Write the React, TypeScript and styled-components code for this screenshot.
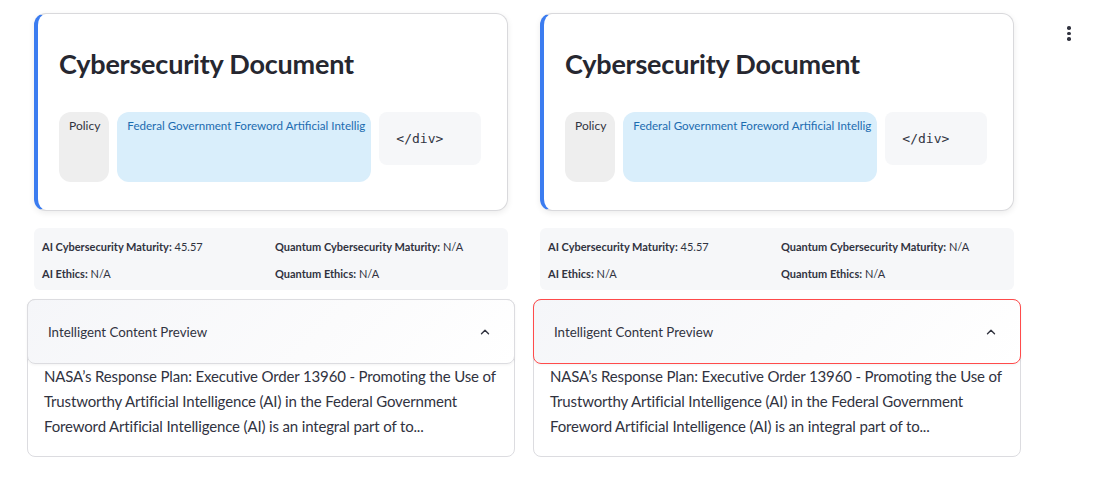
import React from 'react';
import styled, { createGlobalStyle } from 'styled-components';

type Doc = {
  title: string;
  category: string;
  source: string;
  aiMaturity: string;
  quantumMaturity: string;
  aiEthics: string;
  quantumEthics: string;
  preview: string;
};

const doc: Doc = {
  title: 'Cybersecurity Document',
  category: 'Policy',
  source: 'Federal Government Foreword Artificial Intellig',
  aiMaturity: '45.57',
  quantumMaturity: 'N/A',
  aiEthics: 'N/A',
  quantumEthics: 'N/A',
  preview:
    'NASA’s Response Plan: Executive Order 13960 - Promoting the Use of Trustworthy Artificial Intelligence (AI) in the Federal Government Foreword Artificial Intelligence (AI) is an integral part of to...',
};

const GlobalStyle = createGlobalStyle`
  body {
    margin: 0;
    background: #ffffff;
    font-family: "Lato", "Noto Sans", sans-serif;
    color: #31333f;
  }
`;

function ChevronUp(): JSX.Element {
  return (
    <svg width="14" height="14" viewBox="0 0 24 24" fill="none">
      <path
        d="M6 15l6-6 6 6"
        stroke="#31333f"
        strokeWidth="2.4"
        strokeLinecap="round"
        strokeLinejoin="round"
      />
    </svg>
  );
}

function DocColumn({ content, active }: { content: Doc; active: boolean }): JSX.Element {
  return (
    <Column>
      <Card>
        <Title>{content.title}</Title>
        <PillRow>
          <Pill tone="grey">{content.category}</Pill>
          <Pill tone="blue" wide>
            {content.source}
          </Pill>
          <CodeBlock>&lt;/div&gt;</CodeBlock>
        </PillRow>
      </Card>

      <Metrics>
        <Metric>
          <b>AI Cybersecurity Maturity:</b> {content.aiMaturity}
        </Metric>
        <Metric>
          <b>Quantum Cybersecurity Maturity:</b> {content.quantumMaturity}
        </Metric>
        <Metric>
          <b>AI Ethics:</b> {content.aiEthics}
        </Metric>
        <Metric>
          <b>Quantum Ethics:</b> {content.quantumEthics}
        </Metric>
      </Metrics>

      <Expander>
        <ExpanderHeader active={active}>
          <span>Intelligent Content Preview</span>
          <ChevronUp />
        </ExpanderHeader>
        <ExpanderBody>{content.preview}</ExpanderBody>
      </Expander>
    </Column>
  );
}

export default function App(): JSX.Element {
  return (
    <>
      <GlobalStyle />
      <Page>
        <Columns>
          <DocColumn content={doc} active={false} />
          <DocColumn content={doc} active />
        </Columns>
        <MenuButton aria-label="menu">
          <Dot />
          <Dot />
          <Dot />
        </MenuButton>
      </Page>
    </>
  );
}

const Page = styled.div`
  position: relative;
  width: 1096px;
  height: 481px;
  padding: 13px 0 0 27px;
  box-sizing: border-box;
`;

const Columns = styled.div`
  display: grid;
  grid-template-columns: 488px 488px;
  column-gap: 18px;
`;

const Column = styled.div`
  display: flex;
  flex-direction: column;
`;

const Card = styled.div`
  margin: 0 7px;
  height: 198px;
  box-sizing: border-box;
  padding: 33px 24px 0 21px;
  background: #ffffff;
  border: 1px solid #d9d9dc;
  border-left: 4px solid #3b7cf0;
  border-radius: 12px;
  box-shadow: 0 2px 6px rgba(0, 0, 0, 0.08);
`;

const Title = styled.h3`
  margin: 0 0 31px;
  font-size: 27px;
  line-height: 34px;
  font-weight: 700;
  color: #262730;
  letter-spacing: -0.2px;
`;

const PillRow = styled.div`
  display: flex;
  align-items: flex-start;
  gap: 8px;
`;

const Pill = styled.div<{ tone: 'grey' | 'blue'; wide?: boolean }>`
  height: 70px;
  box-sizing: border-box;
  padding: 7px 9px 7px 10px;
  border-radius: 12px;
  font-size: ${({ wide }) => (wide ? '11.6px' : '12px')};
  line-height: 14px;
  white-space: nowrap;
  width: ${({ wide }) => (wide ? '254px' : 'auto')};
  background: ${({ tone }) => (tone === 'blue' ? '#d9eefb' : '#eeeeee')};
  color: ${({ tone }) => (tone === 'blue' ? '#1c6cb0' : '#31333f')};
`;

const CodeBlock = styled.div`
  width: 102px;
  height: 53px;
  box-sizing: border-box;
  padding: 0 17px;
  display: flex;
  align-items: center;
  background: #f6f7f9;
  border-radius: 8px;
  font-family: "DejaVu Sans Mono", "Liberation Mono", monospace;
  font-size: 13px;
  color: #31333f;
`;

const Metrics = styled.div`
  margin: 17px 7px 0;
  height: 62px;
  box-sizing: border-box;
  padding: 10px 8px 8px;
  display: grid;
  grid-template-columns: 1fr 1fr;
  column-gap: 8px;
  row-gap: 10px;
  background: #f6f7f9;
  border-radius: 6px;
`;

const Metric = styled.div`
  font-size: 11px;
  line-height: 17px;
  color: #31333f;
  white-space: nowrap;

  b {
    font-weight: 700;
  }
`;

const Expander = styled.div`
  margin-top: 9px;
  height: 158px;
  box-sizing: border-box;
  border: 1px solid #dcdce0;
  border-radius: 8px;
`;

const ExpanderHeader = styled.div<{ active: boolean }>`
  margin: -1px -1px 0;
  height: 65px;
  box-sizing: border-box;
  padding: 0 22px 0 20px;
  display: flex;
  align-items: center;
  justify-content: space-between;
  font-size: 13.3px;
  color: #31333f;
  border: 1px solid ${({ active }) => (active ? '#ff4b4b' : '#dcdce0')};
  border-radius: 8px;
  background: linear-gradient(135deg, #f5f6f9 0%, #fbfbfc 60%, #ffffff 100%);
  box-shadow: 0 1px 3px rgba(0, 0, 0, 0.05);
`;

const ExpanderBody = styled.div`
  padding: 0 12px 0 16px;
  font-size: 15px;
  letter-spacing: -0.15px;
  line-height: 25px;
  color: #31333f;
`;

const MenuButton = styled.div`
  position: absolute;
  top: 26px;
  left: 1067px;
  display: flex;
  flex-direction: column;
  gap: 2px;
`;

const Dot = styled.span`
  width: 3.5px;
  height: 3.5px;
  border-radius: 50%;
  background: #31333f;
`;
